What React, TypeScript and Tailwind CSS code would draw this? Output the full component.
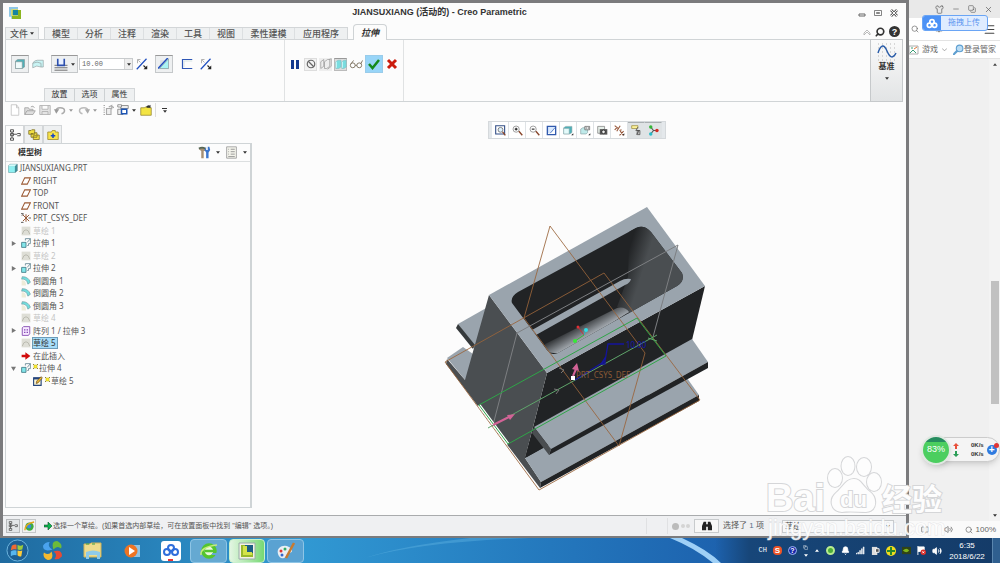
import React from "react";
import { Search, Shirt, Minus, X, Copy, Menu, Volume2, Bell, BookOpen } from "lucide-react";

type IconName =
  | "solid" | "part" | "surface" | "depth" | "flip" | "remove" | "thicken" | "ban" | "wire" | "shade" | "glasses"
  | "new" | "open" | "save" | "undo" | "redo" | "regen" | "windows" | "folder"
  | "tree" | "folders" | "star" | "tools" | "list"
  | "plane" | "csys" | "sketch" | "extrude" | "round" | "pattern" | "insert" | "edit"
  | "refit" | "zoomIn" | "zoomOut" | "repaint" | "saved" | "views" | "camera" | "datum" | "annot" | "spin";

const shapes: Record<IconName, React.ReactNode> = {
  solid: <><path d="M2 4l3-2h9v10l-3 2H2z" fill="#4fb0b8" stroke="#7f9396" strokeWidth=".8" /><path d="M2 5h9v9H2z" fill="#f0fbfb" stroke="#7f9396" strokeWidth=".8" /></>,
  part: <><path d="M1 4l3-2h11v10l-3 3H1z" fill="#3f8f99" stroke="#5d7f84" strokeWidth=".8" /><path d="M1 5h10v10H1z" fill="#8ff0f2" /><path d="M1 4l3-2h10l-3 3H1z" fill="#d2fbfb" /></>,
  surface: <><path d="M1 13V7q2-4 6-4h8v9h-3q-6-3-11 1z" fill="#c8f4f4" stroke="#9aa8aa" /><path d="M1 7q6-3 11 0v5" fill="none" stroke="#9aa8aa" /></>,
  depth: <><path d="M0 9h16M0 12h16M0 15h16" stroke="#555" /><path d="M4 1v8h8V1" fill="#e8f0ff" stroke="#2c4fae" strokeWidth="2" /></>,
  flip: <><path d="M1 15L14 1" stroke="#1d4dc0" strokeWidth="1.6" /><path d="M2 7V2h4M3 3l3 3" stroke="#999" fill="none" /><path d="M15 10v5h-5z" fill="#222" /><path d="M10 10l3 3" stroke="#222" strokeWidth="1.5" /></>,
  remove: <><path d="M3 3h8l4 12H2z" fill="#d9dddf" /><path d="M3 13L14 1v13H2z" fill="#a9f3f3" stroke="#7b8b8e" strokeWidth=".8" /><path d="M0 14L13 0" stroke="#1d4dc0" strokeWidth="1.8" /></>,
  thicken: <><path d="M15 2H2v12h13" fill="none" stroke="#2e56b5" strokeWidth="1.6" /><path d="M15 4H4v8" fill="none" stroke="#cdd" /></>,
  ban: <><circle cx="8" cy="8" r="5" fill="none" stroke="#666" strokeWidth="1.6" /><path d="M4 4l8 8" stroke="#666" strokeWidth="1.6" /></>,
  wire: <path d="M1 5l4-3v9l-4 3zM6 5l4-3h3v9l-4 3H6zM12 2l3-1v10l-5 4" fill="#eee" stroke="#999" />,
  shade: <><path d="M1 5l3-2h4v9l-3 2H1zM9 5l3-2h3v9l-3 2H9z" fill="#79dde0" stroke="#7eb5b9" strokeWidth=".6" /><path d="M2 5v8M10 5v8" stroke="#d8ffff" /></>,
  glasses: <><circle cx="4" cy="9" r="3" fill="#fff" stroke="#6b5f4a" /><circle cx="12" cy="9" r="3" fill="#fff" stroke="#6b5f4a" /><path d="M7 9h2M2 7l3-4M14 7l2-4" stroke="#6b5f4a" fill="none" /></>,
  new: <path d="M3 1h7l3 4v10H3zM10 1v4h3" fill="#fff" stroke="#bbb" />,
  open: <path d="M1 14V5h5l1 2h5v2M1 14l3-5h11l-3 5zM9 4q3-3 5 1" fill="#ddd" stroke="#999" />,
  save: <path d="M1 2h14v12H1zM4 2v5h8V2M4 14v-4h8v4" fill="#e4e4e4" stroke="#aaa" />,
  undo: <><path d="M3 9q0-4 5-4 6 0 6 4 0 3-4 4" fill="none" stroke="#aaa" strokeWidth="2" /><path d="M0 7h7l-4 6z" fill="#999" /></>,
  redo: <><path d="M13 9q0-4-5-4-6 0-6 4 0 3 4 4" fill="none" stroke="#bbb" strokeWidth="2" /><path d="M16 7H9l4 6z" fill="#aaa" /></>,
  regen: <path d="M2 2h2M2 5h2M2 8h2M2 11h2M2 14h2M6 6h6v8H6zM9 4l4-2v5M13 3l3 2" fill="#eee" stroke="#aaa" strokeWidth="1.5" />,
  windows: <><path d="M1 7h7v7H1zM5 2h10v4H5z" fill="#eee" stroke="#777" /><path d="M1 1h5v3H1z" fill="#fff" stroke="#777" /><path d="M6 7h7v6H6z" fill="#fff" stroke="#1d55b4" strokeWidth="2" /></>,
  folder: <><path d="M1 5h5l1-1h6v1h2v10H1z" fill="#f3e443" stroke="#91832b" /><path d="M8 4q2-3 5-2l1-1v4h-4" fill="#333" /></>,
  tree: <path d="M2 1h4v3H2zM2 6h4v3H2zM2 12h4v3H2zM11 6h4v3h-4M4 4v8M6 7h5" fill="none" stroke="#555" strokeWidth="1.3" />,
  folders: <path d="M1 2h3l1-1h4v6H1zM4 6h3l1-1h4v6H4zM7 9h3l1-1h4v6H7z" fill="#f2df45" stroke="#786a22" />,
  star: <><path d="M1 4h5l1-2h4v2h4v10H1z" fill="#f7e34a" stroke="#9a8425" /><path d="M8 6v6M5 9h6" stroke="#1746c5" strokeWidth="2" /></>,
  tools: <><path d="M1 4q4-4 8-1v3H7v9H4V6z" fill="#a58f74" /><path d="M10 1v4h2V1h2l1 4-2 3v7h-3V8L8 5z" fill="#3975ce" /><path d="M1 3q4-2 8 0" fill="none" stroke="#565" strokeWidth="2" /></>,
  list: <><path d="M2 1h12v14H2z" fill="#f4f4ec" stroke="#999" /><path d="M4 4h1M7 4h5M4 7h1M7 7h5M4 10h1M7 10h5M4 13h8" stroke="#888" /></>,
  plane: <path d="M1 13L6 3h9l-5 10z" fill="#fff" stroke="#9b5933" strokeWidth="1.7" />,
  csys: <><path d="M3 3l10 10M3 13L13 3M8 2v12" stroke="#985a38" strokeWidth="1.6" /><path d="M0 1h4M0 15h4M12 8h4M1 4l3-2" stroke="#555" strokeWidth="1.5" /></>,
  sketch: <><path d="M1 1h14v14H1z" fill="#deded6" /><path d="M2 13q2-7 6-7t6 7" fill="none" stroke="#b9b9ae" strokeWidth="1.5" /></>,
  extrude: <><path d="M1 7h7v8H1z" fill="#83e6ea" stroke="#477f8a" strokeWidth="1.4" /><path d="M7 4V1h8v8h-3M10 7l5-6M10 12h2V9" fill="none" stroke="#6b8c98" strokeWidth="1.4" /></>,
  round: <><path d="M1 7q7-1 7 8H1z" fill="#eeebd8" /><path d="M2 1q10 0 13 9l-4 3Q9 4 1 5z" fill="#72dede" stroke="#69959b" /></>,
  pattern: <><path d="M2 3l2-2h10v11l-2 3H2z" fill="#f7e9ff" stroke="#8247af" strokeWidth="1.4" /><path d="M5 6h2M9 6h2M5 10h2M9 10h2" stroke="#7630ab" strokeWidth="2" /></>,
  insert: <path d="M1 6h6V2l8 6-8 6v-4H1z" fill="#d10c0c" />,
  edit: <><path d="M1 3h12v12H1z" fill="#fff8d5" stroke="#24447d" strokeWidth="1.8" /><path d="M1 4h12" stroke="#24447d" strokeWidth="3" /><path d="M5 12l1-4 7-7 2 2-7 8z" fill="#e9ba35" stroke="#5b3b1e" /></>,
  refit: <><path d="M1 1h13v12H1z" fill="#fff" stroke="#334f87" strokeWidth="1.6" /><circle cx="8" cy="7" r="3.5" fill="#dff2ff" stroke="#555" /><path d="M11 10l4 5" stroke="#89472c" strokeWidth="2" /></>,
  zoomIn: <><circle cx="6" cy="6" r="4.5" fill="#fff" stroke="#777" /><path d="M4 6h4M6 4v4" stroke="#222" strokeWidth="1.6" /><path d="M10 9l5 6" stroke="#89472c" strokeWidth="2" /></>,
  zoomOut: <><circle cx="6" cy="6" r="4.5" fill="#fff" stroke="#777" /><path d="M4 6h4" stroke="#222" strokeWidth="1.6" /><path d="M10 9l5 6" stroke="#89472c" strokeWidth="2" /></>,
  repaint: <><path d="M2 2h12v12H2z" fill="#d8e9ff" stroke="#315aad" strokeWidth="2" /><path d="M3 12q7 0 10-8v9H3z" fill="#fff" /><path d="M6 12l7-8" stroke="#315aad" /></>,
  saved: <><path d="M1 4l3-2h9v9l-3 2H1z" fill="#4fb0b8" stroke="#8ca5a8" strokeWidth=".8" /><path d="M1 5h8v8H1z" fill="#e4fbfb" stroke="#8ca5a8" strokeWidth=".8" /><path d="M15 12v3h-3z" fill="#222" /></>,
  views: <><path d="M1 6l3-2h7v7l-2 2H1z" fill="#bfeaea" stroke="#8ca5a8" /><path d="M7 2h7v5H7z" fill="#fff" stroke="#555" /><path d="M9 3v3M12 3v3" stroke="#555" /><path d="M15 12v3h-3z" fill="#222" /></>,
  camera: <><path d="M1 2h10v10H1z" fill="#e6efe9" stroke="#777" /><path d="M4 6h11v8H4z" fill="#555" /><circle cx="9.5" cy="10" r="2.6" fill="#eee" stroke="#111" /></>,
  datum: <><path d="M4 9L9 1M1 1l5 4M9 9l5 6M1 7l4-4M8 15l6-6M8 8l3-1" stroke="#97573a" strokeWidth="1.6" /><path d="M15 12v3h-3z" fill="#222" /></>,
  annot: <><path d="M1 1h9v4H1z" fill="#fff6a0" stroke="#97852c" /><path d="M10 3l-3 5h5l-4 6M9 8h4v6H9z" fill="#bbb" stroke="#444" /></>,
  spin: <><path d="M4 3l4 5-4 5M8 8h4" stroke="#555" fill="none" strokeWidth="1.5" /><circle cx="4" cy="3" r="2.5" fill="#35b536" /><circle cx="4" cy="13" r="2.5" fill="#27bcc8" /><circle cx="13" cy="8" r="2.5" fill="#d42a22" /></>,
};

function Icon({ name, className = "w-3 h-3" }: { name: IconName; className?: string }) {
  return (
    <svg viewBox="0 0 16 16" className={`${className} shrink-0`} aria-hidden="true">
      {shapes[name]}
    </svg>
  );
}

function Caret({ className = "text-[#333]" }: { className?: string }) {
  return (
    <svg viewBox="0 0 6 4" className={`w-1 h-[3px] shrink-0 ${className}`} aria-hidden="true">
      <path d="M0 0h6L3 4z" fill="currentColor" />
    </svg>
  );
}

const tabs = ["模型", "分析", "注释", "渲染", "工具", "视图", "柔性建模", "应用程序"];

interface TreeNode {
  label: string;
  icon: IconName;
  level: number;
  arrow?: "closed" | "open";
  muted?: boolean;
  selected?: boolean;
  pending?: boolean;
}

const tree: TreeNode[] = [
  { label: "JIANSUXIANG.PRT", icon: "part", level: 0 },
  { label: "RIGHT", icon: "plane", level: 1 },
  { label: "TOP", icon: "plane", level: 1 },
  { label: "FRONT", icon: "plane", level: 1 },
  { label: "PRT_CSYS_DEF", icon: "csys", level: 1 },
  { label: "草绘 1", icon: "sketch", level: 1, muted: true },
  { label: "拉伸 1", icon: "extrude", level: 1, arrow: "closed" },
  { label: "草绘 2", icon: "sketch", level: 1, muted: true },
  { label: "拉伸 2", icon: "extrude", level: 1, arrow: "closed" },
  { label: "倒圆角 1", icon: "round", level: 1 },
  { label: "倒圆角 2", icon: "round", level: 1 },
  { label: "倒圆角 3", icon: "round", level: 1 },
  { label: "草绘 4", icon: "sketch", level: 1, muted: true },
  { label: "阵列 1 / 拉伸 3", icon: "pattern", level: 1, arrow: "closed" },
  { label: "草绘 5", icon: "sketch", level: 1, selected: true },
  { label: "在此插入", icon: "insert", level: 1 },
  { label: "拉伸 4", icon: "extrude", level: 1, arrow: "open", pending: true },
  { label: "草绘 5", icon: "edit", level: 2, pending: true },
];

const viewTools: IconName[] = ["refit", "zoomIn", "zoomOut", "repaint", "saved", "views", "camera", "datum", "annot", "spin"];

function TitleBar() {
  return (
    <div className="flex h-[21px] items-center pb-[2px]">
      <svg viewBox="0 0 16 16" className="ml-1 h-3 w-3">
        <path d="M0 0h12v4h4v12H3v-3H0z" fill="#8fc7e6" />
        <path d="M4 4h12v12H4z" fill="#8bb51f" />
        <path d="M3 3h9v9H3z" fill="#e8e25a" />
        <path d="M5 4h7v7H5z" fill="#1585a0" />
      </svg>
      <h1 className="flex-1 text-center text-[9px] font-bold text-[#333]">JIANSUXIANG (活动的) - Creo Parametric</h1>
      <div className="flex w-12 items-center justify-between pr-2 text-[#666]">
        <button aria-label="Minimize"><svg viewBox="0 0 8 8" className="h-2 w-2"><path d="M1 5h6v2H1z" fill="none" stroke="currentColor" /></svg></button>
        <button aria-label="Restore"><svg viewBox="0 0 8 8" className="h-2 w-2"><path d="M.5 1.500h7v5h-7zM2.500 3.500h3v1h-3z" fill="none" stroke="currentColor" strokeWidth=".8" /></svg></button>
        <button aria-label="Close"><svg viewBox="0 0 8 8" className="h-2 w-2"><path d="M1 1l6 6M7 1L1 7" stroke="currentColor" strokeWidth="2.600" /><path d="M1 1l6 6M7 1L1 7" stroke="#fcfcfc" /></svg></button>
      </div>
    </div>
  );
}

function RibbonTabs() {
  return (
    <div className="relative z-10 -mb-px flex h-4 items-end text-[9px] leading-[10px] font-medium text-[#555]">
      <button className="mr-[5px] flex h-[13px] w-[34px] items-center justify-center gap-[2px] border border-[#d3d6d8] bg-[#eef0f1]">
        文件<Caret />
      </button>
      <div className="flex h-[13px] divide-x divide-[#dcdfe1] border border-[#d3d6d8] bg-[#eef0f1]">
        {tabs.map((t) => (
          <button key={t} className={t.length > 2 ? "w-[52px]" : "w-[33px]"}>{t}</button>
        ))}
      </div>
      <button className="ml-[5px] h-4 w-[34px] rounded-t-sm border border-b-0 border-[#cfd3d5] bg-[#fcfcfc] font-bold italic text-[#333]">
        拉伸
      </button>
      <div className="flex flex-1 items-center justify-end gap-1 pb-[3px] pr-[6px]">
        <svg viewBox="0 0 8 8" className="h-2 w-2"><path d="M1 5l3-3 3 3v2L4 4 1 7z" fill="none" stroke="#aaa" strokeWidth=".8" /></svg>
        <button aria-label="Search"><Search className="h-[10px] w-[10px] -scale-x-100 text-[#333]" strokeWidth={4} /></button>
        <button aria-label="Help" className="flex h-[11px] w-[11px] items-center justify-center rounded-full bg-[#333] text-[9px] font-bold text-white">?</button>
      </div>
    </div>
  );
}

function Ribbon() {
  return (
    <div className="mr-[3px] flex h-[63px] border border-[#d0d4d6] bg-[#fcfcfc]">
      <div className="flex w-[279px] flex-col justify-between border-r border-[#e0e2e3]">
        <div className="flex items-center pl-[5px] pt-[15px]">
          <button aria-label="Solid" className="flex h-[18px] w-[18px] items-center justify-center border border-[#c5c8ca] border-t-[#999] bg-[#eef0f1]"><Icon name="solid" /></button>
          <button aria-label="Surface" className="ml-[3px]"><Icon name="surface" /></button>
          <button aria-label="Depth" className="ml-[7px] flex h-[18px] w-[27px] items-center justify-between border border-[#c5c8ca] border-t-[#999] bg-[#eef0f1] px-[2px]">
            <Icon name="depth" className="h-[13px] w-[14px]" /><Caret />
          </button>
          <label className="relative ml-[1px] flex items-center">
            <select aria-label="Depth value" className="h-3 w-[54px] appearance-none border border-[#c8cbcd] bg-white pl-[2px] font-['Liberation_Mono'] text-[7px] leading-[10px] text-[#666]">
              <option>10.00</option>
            </select>
            <span className="pointer-events-none absolute right-px flex h-[10px] w-2 items-center justify-center border-l border-[#d5d5d5] bg-[#eee]"><Caret /></span>
          </label>
          <button aria-label="Flip direction" className="ml-[3px]"><Icon name="flip" /></button>
          <button aria-label="Remove material" className="ml-[7px] flex h-[18px] w-[18px] items-center justify-center border border-[#c5c8ca] border-t-[#999] bg-[#eef0f1]"><Icon name="remove" /></button>
          <button aria-label="Thicken" className="ml-[8px]"><Icon name="thicken" /></button>
          <button aria-label="Flip side" className="ml-[7px]"><Icon name="flip" /></button>
        </div>
        <div className="ml-[38px] flex h-[13px] w-[91px] divide-x divide-[#cdd1d3] border border-b-0 border-[#d3d6d8] bg-[#eef0f1] text-[8px] text-[#333]">
          {["放置", "选项", "属性"].map((t) => <button key={t} className="flex-1">{t}</button>)}
        </div>
      </div>
      <div className="flex w-[119px] items-start border-r border-[#e0e2e3] pl-[6px] pt-[15px]">
        <div className="flex h-[18px] items-center">
          <button aria-label="Pause" className="flex w-[9px] gap-[2px]"><span className="h-[9px] w-[3px] bg-[#12388e]" /><span className="h-[9px] w-[3px] bg-[#12388e]" /></button>
          <button aria-label="No preview" className="ml-1 flex h-[13px] w-[13px] items-center justify-center border border-[#ddd] bg-[#f2f2f2]"><Icon name="ban" /></button>
          <button aria-label="Unattached" className="ml-[2px] flex h-[13px] w-[13px] items-center justify-center bg-[#eee]"><Icon name="wire" /></button>
          <button aria-label="Attached" className="ml-[2px] flex h-[13px] w-[13px] items-center justify-center border border-[#bbb] border-t-[#999] bg-[#ddd]"><Icon name="shade" /></button>
          <button aria-label="Verify" className="ml-[2px]"><Icon name="glasses" className="h-[13px] w-[14px]" /></button>
          <button aria-label="Accept" className="ml-[2px] flex h-[18px] w-[18px] items-center justify-center border border-[#9accea] bg-[#98d5f8]">
            <svg viewBox="0 0 12 12" className="h-3 w-3"><path d="M1 6l3.500 4L11 2" fill="none" stroke="#148a1b" strokeWidth="2.500" /></svg>
          </button>
          <button aria-label="Cancel" className="ml-[3px]">
            <svg viewBox="0 0 12 12" className="h-3 w-3"><path d="M2 2l8 8M10 2l-8 8" stroke="#cb1c0d" strokeWidth="3" /></svg>
          </button>
        </div>
      </div>
      <div className="flex-1" />
      <button className="-my-px -mr-px flex w-[33px] flex-col items-center border border-[#c6c9cb] bg-linear-to-b from-[#fafafa] to-[#e2e4e5] pt-[3px] text-[8px] leading-3 font-bold text-[#333]">
        <svg viewBox="0 0 20 18" className="h-[18px] w-5">
          <path d="M1 1h18M1 5h18M1 9h18M1 13h18M1 17h18" stroke="#b5b5b5" strokeDasharray="1 3" />
          <path d="M1 10C4 1 7 1 10 8s6 8 9 2" fill="none" stroke="#285ba8" strokeWidth="1.400" />
        </svg>
        <span className="mb-[4px]">基准</span>
        <Caret />
      </button>
    </div>
  );
}

function QuickBar() {
  return (
    <div className="flex h-4 items-center pl-1 text-[#999]">
      <div className="flex items-center gap-[3px]">
        <Icon name="new" /><Icon name="open" /><Icon name="save" />
      </div>
      <div className="ml-[3px] flex items-center gap-[3px]"><Icon name="undo" /><Caret className="text-[#999]" /></div>
      <div className="ml-[5px] flex items-center gap-[3px]"><Icon name="redo" /><Caret className="text-[#999]" /></div>
      <div className="ml-[5px] flex items-center gap-[3px]"><Icon name="regen" /><Icon name="windows" /><Caret /><Icon name="folder" className="ml-px h-3 w-3" /></div>
      <div className="ml-[3px] h-[14px] w-px bg-[#ddd]" />
      <span className="ml-[6px] flex flex-col items-center gap-px"><span className="h-px w-[5px] bg-[#333]" /><Caret /></span>
    </div>
  );
}

function ModelTree() {
  return (
    <div className="flex flex-1 flex-col border border-r-2 border-[#cfd4d6]">
      <div className="flex h-[18px] items-center border-b border-[#dcdfe0] pl-3 pr-[3px]">
        <h2 className="flex-1 text-[8px] font-bold text-[#333]">模型树</h2>
        <Icon name="tools" className="mr-[5px] h-[13px] w-[13px]" /><Caret />
        <Icon name="list" className="ml-[5px] mr-[5px] h-[13px] w-[13px]" /><Caret />
      </div>
      <ul className="grid h-[225px] auto-rows-fr font-['Noto_Sans','Noto_Sans_CJK_SC',sans-serif] text-[8px] leading-3 text-[#555]">
        {tree.map((n, i) => (
          <li key={i} className={`flex items-center ${n.level === 0 ? "pl-[2px]" : n.level === 1 ? "pl-[5px]" : "pl-[17px]"}`}>
            {n.level > 0 && (
              <span className="mr-[5px] w-[5px] text-[#777]">
                {n.arrow && (
                  <svg viewBox="0 0 6 6" className="h-[5px] w-[5px]"><path d={n.arrow === "open" ? "M0 1h6L3 6z" : "M1 0v6l5-3z"} fill="currentColor" /></svg>
                )}
              </span>
            )}
            <Icon name={n.icon} className="mr-[2px] h-[10px] w-[10px]" />
            {n.pending && (
              <svg viewBox="0 0 5 5" className="mb-[3px] mr-px h-[5px] w-[5px]"><path d="M0 0l5 5M5 0L0 5" stroke="#8d8430" /><path d="M1 1h3v3H1z" fill="#fff22c" stroke="#c7b52a" strokeWidth=".6" /></svg>
            )}
            <span className={n.selected ? "-ml-px border border-[#6d9cb8] bg-[#a5dcf8] pr-px leading-[10px] text-[#333]" : n.muted ? "text-[#c4c4c4]" : ""}>{n.label}</span>
          </li>
        ))}
      </ul>
    </div>
  );
}

function Gearbox() {
  return (
    <svg viewBox="440 200 275 295" className="mt-[61px] h-[295px] w-[275px]" role="img" aria-label="Extruded housing">
      <defs>
        <linearGradient id="wall" gradientUnits="userSpaceOnUse" x1="627" y1="255" x2="646" y2="261">
          <stop offset="0" stopColor="#212325" /><stop offset="1" stopColor="#4a4e51" />
        </linearGradient>
        <linearGradient id="floor" gradientUnits="userSpaceOnUse" x1="583" y1="320" x2="591" y2="334">
          <stop offset="0" stopColor="#212325" /><stop offset="1" stopColor="#a0a6ac" />
        </linearGradient>
        <clipPath id="cavity"><path d="M512 303Q510 297 518 292L636 228Q644 224 651 232L682 273Q685 281 677 286L558 353Q551 356 547 350z" /></clipPath>
      </defs>
      {/* flanges on the far side */}
      <path d="M458 324l30-17v38l-13 4z" fill="#9aa4ad" />
      <path d="M458 324l17 21-2 4-17-21z" fill="#35393b" />
      <path d="M447 358l16-11 10 7-7 27z" fill="#9aa4ad" />
      {/* body */}
      <path d="M547 373L705 286 692 340 620 430 525 458z" fill="#212325" />
      <path d="M489 295l58 78-22 85 16 24-1 6-94-124 1-5 18 21z" fill="#4a4e51" />
      <path d="M489 295L647 207l58 79-158 87z" fill="#9aa4ad" />
      <g clipPath="url(#cavity)">
        <path d="M500 200h200v170H500z" fill="#212325" />
        <path d="M630 215h60v80l-60 20-13-8 11-30z" fill="url(#wall)" />
        <path d="M545 352l0-8 72-36q8-2 12 4l-66 42z" fill="url(#floor)" />
        <path d="M532 330l88-49q5-3 11-2-1 4-6 6l-89 50z" fill="#9aa4ad" />
      </g>
      {/* near flange and base */}
      <path d="M525 458l18-10 144-70 12 17-158 87z" fill="#9aa4ad" />
      <path d="M699 395v6l-159 87 1-6z" fill="#212325" />
      <path d="M532 433l-7 25 18-10z" fill="#212325" />
      <path d="M534 427l158-88 16 23-157 87z" fill="#9aa4ad" />
      <path d="M708 362v6l-159 87 2-6z" fill="#212325" />
      <path d="M534 427l17 22-2 6-17-22z" fill="#4a4e51" />
      {/* datum planes */}
      <g fill="none" stroke="#9a653b" strokeWidth="1" opacity=".85">
        <path d="M550 226l95 127-26 93-95-128z" />
        <path d="M445 362L604 273l96 127-161 90z" />
      </g>
      <path d="M678 245L517 333l-24 92M678 245l-25 92" fill="none" stroke="#7d7f82" />
      <path d="M479 405l29 39" stroke="#fff" strokeWidth="3" />
      <path d="M479 405L637 318l29 38-158 88z" fill="none" stroke="#2fa548" />
      <path d="M488 428l169-93M648 338l9 3" fill="none" stroke="#5fa56b" strokeWidth="1" />
      <path d="M554 389l5 1-3 4M559 368l5 2-3 3" fill="none" stroke="#777" />
      <path d="M493 425l16-8M573 376l3-7" stroke="#d26396" strokeWidth="2" />
      <path d="M515 414l-8 1 3 5zM577 363l-5 6 7 2z" fill="#d26396" />
      <path d="M575 380l30-19 3-17h16M601 364l4-6v6z" fill="none" stroke="#14149d" strokeWidth="1.300" />
      <text x="626" y="348" fontSize="8" fontFamily="Noto Sans" fill="#1515b0">10.00</text>
      <text x="576" y="378" fontSize="8" fontFamily="Noto Sans" fill="#8a5a36">PRT_CSYS_DEF</text>
      <path d="M578 327l6 8" stroke="#c8303a" />
      <path d="M584 335l2-5" stroke="#2fb5c0" />
      <path d="M584 335l-9 6" stroke="#35ba37" />
      <circle cx="578" cy="327" r="1.500" fill="#e02f35" />
      <circle cx="586" cy="330" r="2" fill="#2fdce6" />
      <circle cx="575" cy="341" r="2" fill="#35ea37" />
      <path d="M571 376h4v4h-4z" fill="#fff" />
    </svg>
  );
}

function Canvas() {
  return (
    <main className="flex flex-1 flex-col items-center pr-1 pt-[19px]">
      <div className="flex h-[18px] items-stretch border border-[#d5d9dc] bg-[#e4e8eb] px-[3px]">
        {viewTools.map((name) => (
          <button key={name} aria-label={name} className={`flex w-[17px] items-center justify-center border-r border-[#dfe3e6] ${name === "annot" || name === "spin" ? "border-t border-t-[#aaafb2] bg-[#dfe3e5]" : "bg-white"}`}>
            <Icon name={name} className="h-[11px] w-[11px]" />
          </button>
        ))}
      </div>
      <Gearbox />
    </main>
  );
}

function StatusBar() {
  return (
    <footer className="flex h-[21px] items-center border-t border-[#a9abad] bg-[#eff0f2] pl-[3px] text-[8px] text-[#555]">
      <button aria-label="Tree" className="flex h-[14px] w-[14px] items-center justify-center border border-[#b8bbbd] bg-[#e3e6e8]"><Icon name="tree" className="h-[10px] w-[10px]" /></button>
      <button aria-label="Browser" className="ml-[2px] flex h-[14px] w-[14px] items-center justify-center border border-[#c5c8ca]">
        <svg viewBox="0 0 12 12" className="h-[11px] w-[11px]"><circle cx="6" cy="6" r="4.500" fill="#3faa40" /><path d="M3 5q2-3 5 0l-1 3H4z" fill="#3a8de0" /><path d="M1 10Q1 3 11 1" fill="none" stroke="#e3a51c" strokeWidth="1.600" /></svg>
      </button>
      <svg viewBox="0 0 8 8" className="ml-[8px] h-2 w-2"><path d="M0 3h4V0l4 4-4 4V5H0z" fill="#0bb54c" stroke="#134f2b" strokeWidth=".6" /></svg>
      <p className="ml-px flex-1 text-[7px]">选择一个草绘。(如果首选内部草绘，可在放置面板中找到 "编辑" 选项。)</p>
      <div className="mr-1 flex h-4 w-[22px] border-x border-[#e0e1e3]" />
      <span className="h-[7px] w-[7px] rounded-full bg-[#bbb]" />
      <span className="ml-[2px] h-1 w-1 rounded-full bg-[#d4d4d4]" />
      <span className="ml-px h-1 w-1 rounded-full bg-[#d4d4d4]" />
      <button aria-label="Find" className="mx-[4px] flex h-[14px] w-[25px] items-center justify-center border border-[#c8cbcd] bg-[#f7f7f7]">
        <svg viewBox="0 0 14 12" className="h-[10px] w-3"><path d="M1 11V6l2-5h3v3h2V1h3l2 5v5H8V7H6v4z" fill="#222" /></svg>
      </button>
      <span className="w-[59px]">选择了 <span className="text-[#58708c]">1</span> 项</span>
      <label className="relative mr-[12px] flex items-center">
        <select aria-label="Filter" className="h-[13px] w-[112px] appearance-none border border-[#c8cbcd] bg-[#f7f8f9] pl-[2px] text-[8px] leading-[11px] text-[#444]">
          <option>草绘</option>
        </select>
        <span className="pointer-events-none absolute right-1 flex"><Caret /></span>
      </label>
    </footer>
  );
}

function BrowserStrip() {
  return (
    <aside className="flex w-[91px] shrink-0 flex-col bg-[#f0f0f0] text-[8px] text-[#666]">
      <div className="flex h-[18px] items-center justify-end gap-2 bg-[#e9e9e9] pr-[7px]">
        <Shirt className="h-[9px] w-[9px]" /><Minus className="h-2 w-2" /><Copy className="h-2 w-2 -scale-x-100 rotate-90" /><X className="h-[9px] w-[9px]" />
      </div>
      <div className="relative flex h-[23px] items-center border-b border-[#e3e3e3] bg-white pl-[2px]">
        <Search className="h-2 w-2" />
        <BookOpen className="ml-4 h-2 w-2" />
        <span className="flex-1" />
        <Menu className="mr-1 h-[13px] w-[13px] text-[#444]" />
        <button className="absolute -top-[3px] left-[13px] flex h-4 w-[66px] items-center overflow-hidden rounded-[3px] border border-[#6aa5f5] bg-[#dfecff] text-[#5b95ef]">
          <span className="flex h-full w-[18px] items-center justify-center bg-[#4c92f6]">
            <svg viewBox="0 0 14 12" className="h-[11px] w-3"><g fill="none" stroke="#fff" strokeWidth="2"><circle cx="7" cy="4" r="2.500" /><circle cx="4" cy="8" r="2.500" /><circle cx="10" cy="8" r="2.500" /></g></svg>
          </span>
          <span className="flex-1">拖拽上传</span>
        </button>
      </div>
      <div className="flex h-[18px] items-center whitespace-nowrap border-b border-[#e3e3e3] bg-white">
        <svg viewBox="0 0 10 10" className="h-[10px] w-[10px]"><path d="M0 1h9v8H0z" fill="#fff" stroke="#999" strokeWidth=".8" /><path d="M1 8l3-3 3 3M2 3h2" fill="none" stroke="#3a9c74" /><path d="M5 4l3-2" stroke="#e47733" /></svg>
        <span className="ml-[3px]">游戏</span>
        <svg viewBox="0 0 6 4" className="ml-1 h-1 w-[5px]"><path d="M0 0l3 3 3-3" fill="none" stroke="#999" /></svg>
        <svg viewBox="0 0 10 10" className="ml-[6px] h-[11px] w-[11px]"><circle cx="6" cy="4" r="3" fill="#b9dcf5" stroke="#5f9fd0" /><path d="M4 6L0 10" stroke="#5f9fd0" strokeWidth="2" /></svg>
        <span>登录管家</span>
      </div>
      <div className="flex flex-1 justify-end">
        <div className="flex w-[11px] flex-col items-center bg-[#f3f3f3] py-1">
          <svg viewBox="0 0 6 4" className="h-[3px] w-1"><path d="M0 4h6L3 0z" fill="#444" /></svg>
          <div className="grow-[215]" />
          <div className="w-2 grow-[123] bg-[#c1c1c1]" />
          <div className="grow-[110]" />
          <Caret />
        </div>
      </div>
      <div className="flex h-[17px] items-center justify-end gap-[3px] bg-[#fafafa] pr-1">
        <BookOpen className="mr-[12px] h-2 w-2" /><Volume2 className="mr-[9px] h-[9px] w-[9px]" /><Search className="h-2 w-2" /><span>100%</span>
      </div>
    </aside>
  );
}

function SpeedBall() {
  return (
    <div className="absolute right-0 bottom-[98px] flex h-[31px] w-[79px] items-center">
      <div className="ml-4 flex h-[25px] flex-1 items-center rounded-r-full border border-[#ccc] bg-[#f4f4f4] pl-[15px] text-[6px] font-bold leading-[9px] text-[#333] shadow-md">
        <svg viewBox="0 0 6 18" className="h-[18px] w-[6px]">
          <path d="M3 2l3 3H4v3H2V5H0z" fill="#e8503a" /><path d="M3 16l3-3H4v-3H2v3H0z" fill="#2b9d57" />
        </svg>
        <span className="ml-[12px]">0K/s<br />0K/s</span>
        <span className="relative ml-[3px] flex h-[10px] w-[10px] items-center justify-center rounded-full bg-[#2f7be0] text-[10px] text-white">
          +<span className="absolute -right-[2px] -top-[2px] h-[5px] w-[5px] rounded-full bg-[#e23434]" />
        </span>
      </div>
      <div className="absolute left-0 flex h-[30px] w-[30px] items-center justify-center rounded-full border-2 border-[#dfe8e1] bg-linear-to-b from-[#268d5f] from-20% to-[#4bce5f] to-20% text-[9px] text-white shadow-md">83%</div>
    </div>
  );
}

function Watermark() {
  return (
    <div className="pointer-events-none absolute right-[54px] bottom-[22px]">
      <svg viewBox="766 455 180 86" className="h-[86px] w-[180px]" fontFamily="Liberation Sans, Noto Sans CJK SC, sans-serif" fontWeight="bold" style={{ paintOrder: "stroke" }}>
        <g fill="#fdfdfd" stroke="#d5d6d8" strokeWidth="2">
          <text x="766" y="511" fontSize="38">Bai</text>
          <ellipse cx="835" cy="478" rx="7" ry="9" /><ellipse cx="848" cy="466" rx="6.500" ry="9" />
          <ellipse cx="864" cy="467" rx="7" ry="9" /><ellipse cx="874" cy="482" rx="7" ry="9" />
          <path d="M854 479c7 0 9 8 16 13s8 19-4 20c-8 0-16-1-24 0-12-1-13-13-6-19s10-14 18-14z" />
          <text x="840" y="507" fontSize="22">du</text>
          <text x="882" y="510" fontSize="30">经验</text>
        </g>
        <text x="768" y="535" fontSize="22" fontWeight="normal" fill="#fff" fillOpacity=".9" stroke="#d5d6d8" strokeOpacity=".6" strokeWidth="1">jingyan.baidu.com</text>
      </svg>
    </div>
  );
}

function Taskbar() {
  return (
    <nav className="relative flex h-[25px] items-center bg-linear-to-r from-[#1f6ba0] via-[#3199d3] via-30% to-[#1d62ae] to-72% text-white">
      <svg viewBox="0 0 1000 25" preserveAspectRatio="none" className="absolute inset-0 h-full w-full" aria-hidden="true">
        <defs><linearGradient id="tray" x1="0" x2="1"><stop offset="0" stopColor="#174679" stopOpacity="0" /><stop offset=".12" stopColor="#174679" /><stop offset="1" stopColor="#143b68" /></linearGradient></defs>
        <path d="M715 0h285v25H715z" fill="url(#tray)" />
        <path d="M670 0h12q26 12 39 25h-8Q695 10 670 0z" fill="#9fd0f6" />
        <path d="M365 20Q420 4 530 0h-60Q400 8 365 20z" fill="#63b6e4" opacity=".4" />
      </svg>
      <div className="relative flex h-full flex-1 items-center">
        <button aria-label="Start" className="flex w-[34px] justify-center">
          <svg viewBox="0 0 24 24" className="h-[23px] w-[23px]"><circle cx="12" cy="12" r="11" fill="#1c5f94" stroke="#6fb6df" /><path d="M6 7q3-2 5-1v5q-3-1-6 1z" fill="#ee6a32" /><path d="M12 6q3 2 6 0l-1 5q-3 1-5 0z" fill="#9bcb3c" /><path d="M5 13q3-2 6-1v5q-3-1-6 1z" fill="#58b6ee" /><path d="M12 12q3 1 5 0l-1 6q-2 1-4-1z" fill="#fccb3a" /></svg>
        </button>
        <button aria-label="Suite" className="mr-1 flex w-9 justify-center">
          <svg viewBox="0 0 20 20" className="h-[19px] w-[19px]"><path d="M10 9Q0 12 0 5q2-4 7-4-3 5 3 8z" fill="#4aa3ee" /><path d="M11 9Q8 0 15 0q6 3 4 8-4-4-8 1z" fill="#6dbb3a" /><path d="M11 11q9-3 9 5-3 4-8 3 4-5-1-8z" fill="#e44b35" /><path d="M9 11q3 9-4 9-6-3-4-8 5 4 8-1z" fill="#f3b92d" /></svg>
        </button>
        <button aria-label="Explorer" className="flex w-[38px] justify-center">
          <svg viewBox="0 0 20 18" className="h-[18px] w-5"><path d="M1 2h6l1-1h10v14H1z" fill="#eedb8c" stroke="#d0b458" /><path d="M3 2h3M9 2h3" stroke="#38a047" /><path d="M3 10q7-3 14 0v7h-3v-4H6v4H3z" fill="#8fcbe9" /></svg>
        </button>
        <button aria-label="Player" className="flex w-[39px] justify-center">
          <svg viewBox="0 0 18 16" className="h-4 w-[18px]"><path d="M6 2h11v12H6z" fill="#8ec4e6" /><circle cx="8" cy="8" r="6.500" fill="#ee7424" /><path d="M6 4v8l6-4z" fill="#fff" /></svg>
        </button>
        <button aria-label="Net disk" className="flex w-[39px] justify-center">
          <svg viewBox="0 0 20 20" className="h-5 w-5"><rect width="20" height="20" rx="3" fill="#fff" /><g fill="none" stroke="#2f6edb" strokeWidth="2"><circle cx="10" cy="7" r="3" /><circle cx="6" cy="11" r="3" /><circle cx="14" cy="11" r="3" /></g><path d="M7 19h5" stroke="#e33" strokeWidth="2" /></svg>
        </button>
        <button aria-label="Browser" className="mr-[2px] flex h-6 w-[37px] items-center justify-center rounded-sm border border-[#8ec5e6] bg-[#65a9d2]">
          <svg viewBox="0 0 18 18" className="h-[18px] w-[18px]"><circle cx="9" cy="9" r="6" fill="#e8f6da" stroke="#54c52f" strokeWidth="3.500" /><path d="M5 9h9" stroke="#54c52f" strokeWidth="2.500" /><path d="M12 12h5" stroke="#65a9d2" strokeWidth="2" /><path d="M1 13Q0 5 17 3" fill="none" stroke="#c5ec79" strokeWidth="1.500" /></svg>
        </button>
        <button aria-label="Creo" className="mr-[2px] flex h-6 w-[36px] items-center justify-center rounded-sm border border-[#c7f0cb] bg-linear-to-r from-[#e2f5e2] to-[#76d873]">
          <svg viewBox="0 0 18 18" className="h-[18px] w-[18px]"><path d="M1 1h16v16H1z" fill="#f3f3e5" stroke="#9aa" /><path d="M3 3h12v12H3z" fill="#98b82d" /><path d="M7 3h8v8H7z" fill="#1d5d84" /><path d="M5 4h4v6h5v3H5z" fill="#d4e34a" /></svg>
        </button>
        <button aria-label="Paint" className="flex h-6 w-[37px] items-center justify-center rounded-sm border border-[#8ec5e6] bg-[#5aa2d2]">
          <svg viewBox="0 0 20 18" className="h-[18px] w-5"><path d="M2 12C0 5 8 2 13 5s3 6 0 6-2 4-5 5-5-1-6-4z" fill="#e9eef3" /><circle cx="5" cy="9" r="1.500" fill="#d33" /><circle cx="9" cy="7" r="1.500" fill="#3a6" /><circle cx="6" cy="13" r="1.500" fill="#36c" /><path d="M18 1l-8 15" stroke="#c77a2f" strokeWidth="2.500" /></svg>
        </button>
      </div>
      <div className="relative flex items-center gap-[6px] text-[8px]">
        <span className="font-['Liberation_Mono'] text-[7px]">CH</span>
        <span className="h-[9px] w-[9px] rounded-sm bg-[#ed5426] text-center text-[8px] leading-[9px] font-bold">S</span>
        <span className="h-[9px] w-[9px] rounded-full border border-[#9fb8ee] bg-[#1728a8] text-center text-[7px] leading-[7px] font-bold">?</span>
        <span className="flex flex-col items-center gap-1"><Copy className="h-[5px] w-[5px]" /><Caret className="text-white" /></span>
        <svg viewBox="0 0 6 4" className="mx-px h-[3px] w-1"><path d="M0 4h6L3 0z" fill="#fff" /></svg>
        <span className="h-[9px] w-[9px] rounded-full border-2 border-[#b9ec8f] bg-[#4cae38]" />
        <Bell className="h-[9px] w-[9px]" fill="white" />
        <svg viewBox="0 0 10 10" className="h-[9px] w-[9px]"><path d="M0 9h1V8H0zM2 9h1V7H2zM4 9h1V5H4zM6 9h1V3H6zM8 9h1V1H8z" fill="#fff" stroke="#fff" strokeWidth=".5" /></svg>
        <svg viewBox="0 0 10 10" className="h-[9px] w-[9px]"><path d="M1 1h6v9H1z" fill="#ddd" /><path d="M5 3h4v4H5z" fill="#555" stroke="#fff" /></svg>
        <svg viewBox="0 0 10 10" className="h-[10px] w-[10px]"><circle cx="5" cy="5" r="5" fill="#f0dc1c" /><path d="M5 1v8M1 5h8" stroke="#298a2c" strokeWidth="2" /></svg>
        <svg viewBox="0 0 10 10" className="h-[9px] w-[9px]"><path d="M0 1h10v8H0z" fill="#304317" /><path d="M1 5q4-4 7 0-3 4-7 0z" fill="#7fb51c" /></svg>
        <svg viewBox="0 0 10 10" className="h-[9px] w-[9px]"><path d="M1 0v10M1 1h7v5H1" stroke="#fff" fill="#fff" /><circle cx="7" cy="7" r="3" fill="#da2d28" /><path d="M6 6l2 2M8 6L6 8" stroke="#fff" /></svg>
        <Volume2 className="h-[10px] w-[10px]" fill="white" />
      </div>
      <div className="relative mx-[4px] w-[42px] text-center text-[8px] leading-[11px]">6:35<br />2018/6/22</div>
      <span className="relative h-full w-2 border-l border-[#5a86ae] bg-[#2f5f8f]" />
    </nav>
  );
}

export default function App() {
  return (
    <div className="relative flex min-h-screen flex-col overflow-hidden bg-[#f0f0f0] font-['Liberation_Sans','Noto_Sans_CJK_SC',sans-serif]">
      <div className="flex flex-1">
        <div className="flex flex-1 flex-col border-[3px] border-b-2 border-[#7b7b7d] bg-[#fcfcfc]">
          <header className="flex flex-col pl-[2px]">
            <TitleBar />
            <RibbonTabs />
            <Ribbon />
          </header>
          <div className="flex flex-1">
            <div className="flex w-[249px] flex-col pb-[7px] pl-[2px]">
              <QuickBar />
              <div className="mt-[7px] flex h-[18px]">
                {(["tree", "folders", "star"] as IconName[]).map((name, i) => (
                  <button key={name} aria-label={name} className={`flex w-[19px] items-center justify-center border border-b-0 border-[#d3d6d8] ${i ? "bg-[#eef0f1]" : "bg-[#fcfcfc]"}`}>
                    <Icon name={name} />
                  </button>
                ))}
              </div>
              <ModelTree />
            </div>
            <Canvas />
          </div>
          <StatusBar />
        </div>
        <BrowserStrip />
      </div>
      <Taskbar />
      <SpeedBall />
      <Watermark />
    </div>
  );
}
